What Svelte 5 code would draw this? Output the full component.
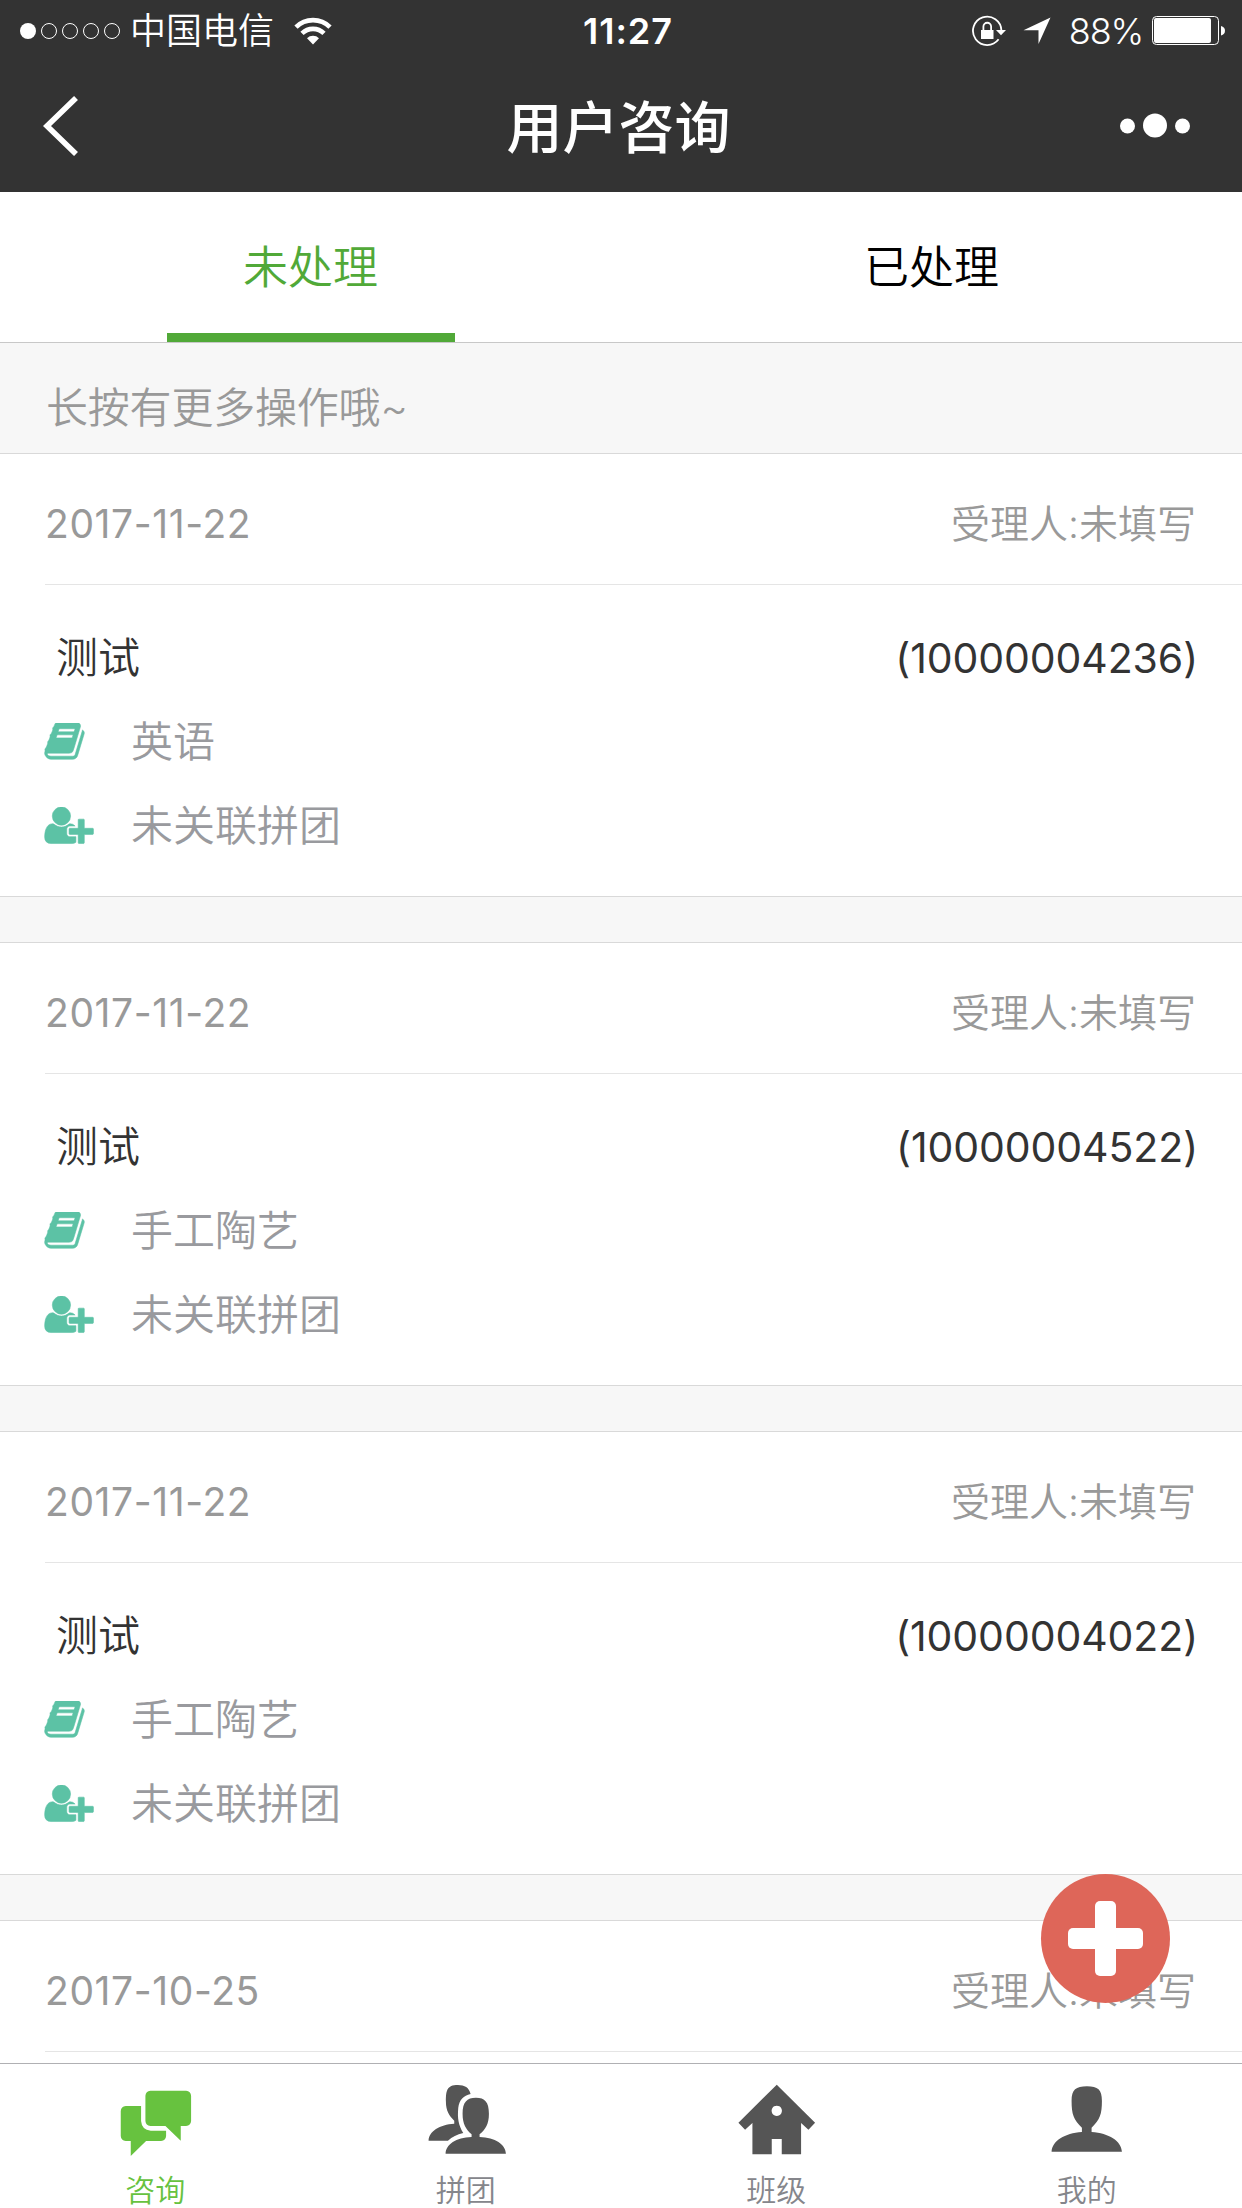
<script>
  let activeTab = "todo";
  let activeNav = "咨询";

  const tabs = [
    { key: "todo", label: "未处理" },
    { key: "done", label: "已处理" },
  ];

  const navs = ["咨询", "拼团", "班级", "我的"];

  const items = [
    { date: "2017-11-22", name: "测试", phone: "10000004236", course: "英语" },
    { date: "2017-11-22", name: "测试", phone: "10000004522", course: "手工陶艺" },
    { date: "2017-11-22", name: "测试", phone: "10000004022", course: "手工陶艺" },
    { date: "2017-10-25" },
  ];
</script>

<main>
  <header>
    <div class="status">
      <div class="left">
        <svg class="signal" width="102" height="18" viewBox="0 0 102 18">
          <circle cx="9" cy="9" r="8" fill="#fff" />
          {#each [30, 51, 72, 93] as cx}
            <circle {cx} cy="9" r="7.5" fill="none" stroke="#fff" />
          {/each}
        </svg>
        <span class="carrier">中国电信</span>
        <svg class="wifi" width="38" height="28" viewBox="0 0 38 28">
          <g fill="none" stroke="#fff" stroke-width="4.6">
            <path d="M2 10.2a24 24 0 0 1 34 0" />
            <path d="M8 16.4a15.6 15.6 0 0 1 22 0" />
          </g>
          <path d="M19 27.5l-6-6.3a8.6 8.6 0 0 1 12 0z" fill="#fff" />
        </svg>
      </div>
      <span class="time">11:27</span>
      <div class="right">
        <svg class="lock" width="36" height="32" viewBox="0 0 36 32">
          <path
            d="M30.4 15.5A14.2 14.2 0 1 0 27.6 24.3"
            fill="none"
            stroke="#fff"
            stroke-width="1.8"
          />
          <path d="M25 15h10l-5 5.2z" fill="#fff" />
          <rect x="10" y="15" width="12.5" height="9" fill="#fff" />
          <path
            d="M12.4 15v-3.4a3.85 3.85 0 0 1 7.7 0V15"
            fill="none"
            stroke="#fff"
            stroke-width="1.8"
          />
        </svg>
        <svg class="locate" width="28" height="28" viewBox="0 0 28 28">
          <path d="M27.5 .5L15.5 27V13.2H.5z" fill="#fff" />
        </svg>
        <span class="percent">88%</span>
        <svg class="battery" width="74" height="30" viewBox="0 0 74 30">
          <rect x=".5" y=".5" width="66" height="28" rx="4" fill="none" stroke="#fff" />
          <rect x="2" y="2" width="57" height="25" rx="2" fill="#fff" />
          <path d="M69 10q4 1 4 4.7t-4 4.7z" fill="#fff" />
        </svg>
      </div>
    </div>
    <div class="navbar">
      <svg class="back" width="36" height="60" viewBox="0 0 36 60">
        <path d="M33 2L4 30l29 28" fill="none" stroke="#fff" stroke-width="5.6" />
      </svg>
      <h1>用户咨询</h1>
      <svg class="more" width="72" height="26" viewBox="0 0 72 26">
        <g fill="#fff">
          <circle cx="8.5" cy="13" r="7.5" />
          <circle cx="36" cy="12.5" r="12" />
          <circle cx="63.5" cy="13" r="7.5" />
        </g>
      </svg>
    </div>
  </header>

  <div class="tabs">
    {#each tabs as tab}
      <button class="tab" class:active={activeTab === tab.key} on:click={() => (activeTab = tab.key)}>
        <span>{tab.label}</span>
      </button>
    {/each}
  </div>

  <div class="list">
    <p class="hint">长按有更多操作哦~</p>
    {#each items as item}
      <section class="card">
        <div class="head">
          <span class="date">{item.date}</span>
          <span class="owner">受理人:未填写</span>
        </div>
        {#if item.name}
          <div class="body">
            <div class="row person">
              <span class="name">{item.name}</span>
              <span class="phone">({item.phone})</span>
            </div>
            <div class="row">
              <svg class="icon" width="51" height="38" viewBox="36 142 2142 1596">
                <path
                  d="M1703 478q40 57 18 129l-275 906q-19 64-76.500 107.500T1247 1664H324q-77 0-148.500-53.500T76 1479q-24-67-2-127 0-4 3-27t4-37q1-8-3-21.500t-3-19.500q2-11 8-21t16.500-23.500T116 1179q23-38 45-91.500t30-91.500q3-10 .5-30t-.5-28q3-11 17-28t17-23q21-36 42-92t25-90q1-9-2.500-32t.5-28q4-13 22-30.500t22-22.500q19-26 42.500-84.500T404 411q1-8-3-25.500t-2-26.500q2-8 9-18t18-23 17-21q8-12 16.500-30.500t15-35 16-36 19.500-32 26.500-23.500 36-11.500T620 134l-1 3q38-9 51-9h761q74 0 114 56t18 130l-274 906q-36 119-71.500 153.500T1089 1408H220q-27 0-38 15-11 16-1 43 24 70 144 70h923q29 0 56-15.500t35-41.500l300-987q7-22 5-57 38 15 59 43zm-1064 2q-4 13 2 22.500t20 9.500h608q13 0 25.500-9.500T1311 480l21-64q4-13-2-22.500t-20-9.500H702q-13 0-25.500 9.500T660 416zm-83 256q-4 13 2 22.500t20 9.500h608q13 0 25.500-9.500T1228 736l21-64q4-13-2-22.500t-20-9.500H619q-13 0-25.500 9.500T577 672z"
                />
              </svg>
              <span>{item.course}</span>
            </div>
            <div class="row">
              <svg class="icon" width="51" height="38" viewBox="-28 130 2142 1596">
                <path
                  d="M704 896q-159 0-271.500-112.500T320 512t112.500-271.500T704 128t271.500 112.500T1088 512 975.500 783.500 704 896zm960 128h352q13 0 22.500 9.500t9.500 22.500v192q0 13-9.500 22.500t-22.500 9.500h-352v352q0 13-9.500 22.500t-22.500 9.500h-192q-13 0-22.500-9.500t-9.500-22.500v-352h-352q-13 0-22.500-9.500t-9.500-22.500v-192q0-13 9.500-22.500t22.500-9.500h352V672q0-13 9.500-22.500t22.500-9.500h192q13 0 22.500 9.500t9.500 22.500v352zm-736 224q0 52 38 90t90 38h256v238q-68 50-171 50H267q-121 0-194-69T0 1405q0-53 3.500-103.500t14-109T44 1084t43-97.500 62-81 85.500-53.500T346 832q19 0 39 17 79 61 154.500 91.500T704 971t164.500-30.500T1023 849q20-17 39-17 132 0 217 96h-223q-52 0-90 38t-38 90v192z"
                />
              </svg>
              <span>未关联拼团</span>
            </div>
          </div>
        {/if}
      </section>
    {/each}
  </div>

  <button class="fab" aria-label="add">
    <svg width="129" height="129" viewBox="0 0 129 129">
      <rect x="54" y="27" width="21" height="75" rx="5" />
      <rect x="27" y="54" width="75" height="21" rx="5" />
    </svg>
  </button>

  <nav>
    {#each navs as nav, i}
      <button class="nav-item" class:active={activeNav === nav} on:click={() => (activeNav = nav)}>
        {#if i === 0}
          <svg width="80" height="76" viewBox="105.75 99 240 228">
            <path
              d="M138 168h46v45q2 27 29 29h46v16q-1 13-15 15h-45l-46 45v-45h-15q-14-1-15-15v-75q1-14 15-15z"
            />
            <path
              d="M212 122h107q14 1 15 15v76q-1 14-15 15h-16v44l-46-44h-45q-14-1-15-15v-76q1-14 15-15z"
            />
          </svg>
        {:else if i === 1}
          <svg width="80" height="76" viewBox="1037.25 99 240 228">
            <path
              d="M1133 105c20 0 34 8 38 27-21 5-34 17-37 42-3 31 1 52 15 75-19 5-33 11-46 23h-58c1-29 33-48 77-51v-9c-15-15-25-30-25-57 0-32 2-50 36-50z"
            />
            <path
              d="M1187 143c27 0 39 13 39 48 0 31-10 46-28 62v8c47 2 78 22 79 50h-181c1-28 31-48 78-50v-8c-17-16-27-31-27-62 0-35 13-48 40-48z"
            />
          </svg>
        {:else if i === 2}
          <svg width="80" height="76" viewBox="108.75 99 240 228">
            <path
              fill-rule="evenodd"
              d="M231 104l115 114-20 21-22-20v94h-58v-46h-30v46h-58v-94l-22 20-20-21zM231 167a15.500 15.500 0 1 0 .1 0z"
            />
          </svg>
        {:else}
          <svg width="80" height="76" viewBox="1040.25 99 240 228">
            <path
              d="M1160 109c33 0 45 10 45 44 0 39-6 57-31 80v13c52 4 89 26 91 59h-211c2-33 39-55 91-59v-13c-25-23-31-41-31-80 0-34 13-44 46-44z"
            />
          </svg>
        {/if}
        <span>{nav}</span>
      </button>
    {/each}
  </nav>
</main>

<style>
  :global(body) {
    background: #fff;
  }
  main {
    position: relative;
    display: flex;
    flex-direction: column;
    width: 1242px;
    height: 2208px;
    overflow: hidden;
    background: #f7f7f7;
    font-family: Inter, "Noto Sans CJK SC", sans-serif;
    font-weight: 400;
  }
  svg {
    display: block;
    flex: none;
  }
  button {
    border: none;
    margin: 0;
    padding: 0;
    background: none;
    font: inherit;
    cursor: pointer;
  }

  header {
    height: 192px;
    background: #333;
    color: #fff;
    flex: none;
  }
  .status {
    display: grid;
    grid-template-columns: 1fr auto 1fr;
    height: 60px;
    font-size: 36px;
    line-height: 62px;
  }
  .left,
  .right {
    display: flex;
    align-items: center;
  }
  .left {
    padding-left: 19px;
  }
  .right {
    justify-content: flex-end;
    padding-right: 16px;
  }
  .carrier {
    margin-left: 9px;
    font-weight: 350;
  }
  .wifi {
    margin-left: 20px;
  }
  .time {
    font-weight: 600;
    padding-left: 14px;
    letter-spacing: 1px;
  }
  .locate {
    margin: 0 18px 0 16px;
  }
  .percent {
    font-weight: 350;
    letter-spacing: -1.2px;
    margin-right: 9px;
  }
  .navbar {
    display: flex;
    align-items: center;
    justify-content: space-between;
    height: 132px;
    padding: 0 51px 0 43px;
  }
  .back {
    margin-right: 36px;
  }
  h1 {
    margin: 0;
    padding: 3px 0 0 3px;
    font-size: 56px;
    font-weight: 500;
    line-height: 80px;
  }

  .tabs {
    display: flex;
    flex: none;
    height: 150px;
    background: #fff;
    border-bottom: 1px solid #c8c8c8;
  }
  .tab {
    flex: 1;
    display: flex;
    justify-content: center;
    font-size: 45px;
    font-weight: 350;
    color: #000;
  }
  .tab span {
    box-sizing: border-box;
    width: 288px;
    height: 150px;
    line-height: 151px;
    border-bottom: 9px solid transparent;
  }
  .tab.active span {
    color: #51a938;
    border-color: #51a938;
  }

  .list {
    flex: 1;
    min-height: 0;
    overflow: hidden;
    font-feature-settings: "calt" 0;
  }
  .hint {
    margin: 0;
    padding-left: 46px;
    height: 110px;
    line-height: 130px;
    font-size: 42px;
    font-weight: 350;
    letter-spacing: -0.2px;
    color: #999;
  }
  .card {
    height: 442px;
    margin-bottom: 45px;
    background: #fff;
    border-top: 1px solid #d9d9d9;
    border-bottom: 1px solid #d9d9d9;
  }
  .head {
    display: flex;
    justify-content: space-between;
    margin-left: 45px;
    padding-right: 46px;
    height: 130px;
    line-height: 139px;
    font-size: 39px;
    color: #999;
    border-bottom: 1px solid #e5e5e5;
  }
  .date {
    letter-spacing: 0.6px;
  }
  .owner {
    font-weight: 350;
  }
  .body {
    padding: 31px 44px 0;
  }
  .row {
    display: flex;
    align-items: center;
    height: 84px;
    line-height: 84px;
    font-size: 42px;
    font-weight: 350;
    color: #999a9e;
  }
  .row .icon {
    margin-right: 36px;
    fill: #5cc2a5;
    stroke: #5cc2a5;
    stroke-width: 24;
  }
  .person {
    justify-content: space-between;
    color: #333;
  }
  .name {
    margin-left: 12px;
  }
  .phone {
    font-size: 41px;
    font-weight: 400;
    letter-spacing: -0.1px;
  }

  .fab {
    position: absolute;
    top: 1874px;
    right: 72px;
    width: 129px;
    height: 129px;
    border-radius: 50%;
    background: #de6659;
  }
  .fab svg {
    fill: #fff;
  }

  nav {
    display: flex;
    flex: none;
    height: 144px;
    background: #fff;
    border-top: 1px solid #b0b0b3;
  }
  .nav-item {
    flex: 1;
    display: flex;
    flex-direction: column;
    align-items: center;
    padding-top: 19px;
    font-size: 30px;
    font-weight: 350;
    line-height: 36px;
    color: #85868b;
    fill: #555;
  }
  .nav-item span {
    margin-top: 13px;
  }
  .nav-item.active {
    color: #67c23f;
    fill: #67c23f;
  }
</style>
